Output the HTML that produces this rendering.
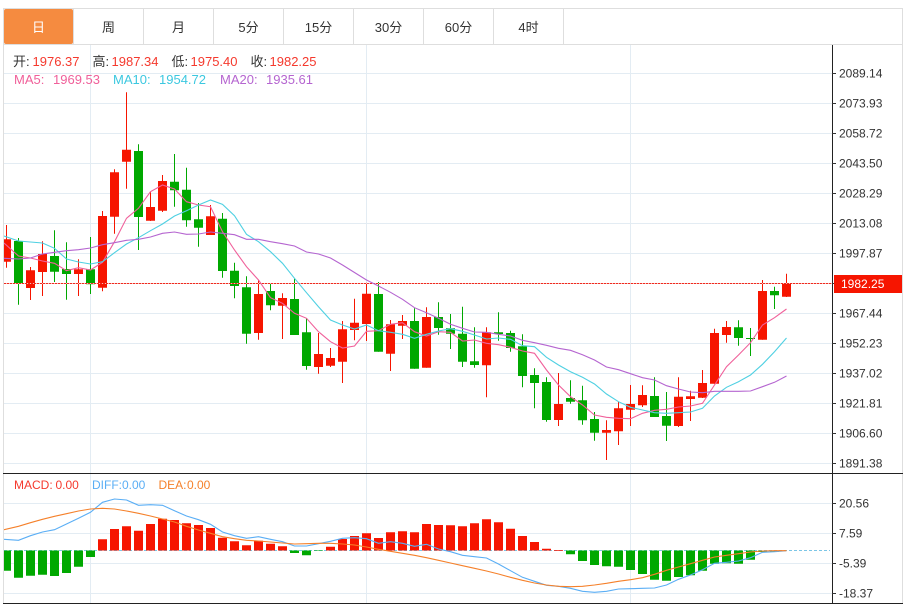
<!DOCTYPE html>
<html><head><meta charset="utf-8"><style>
html,body{margin:0;padding:0;background:#fff;width:906px;height:605px;overflow:hidden}
svg{display:block;font-family:"Liberation Sans","Noto Sans CJK SC",sans-serif}
path,polyline{fill:none}
</style></head><body>
<svg width="906" height="605" viewBox="0 0 906 605" xmlns="http://www.w3.org/2000/svg">
<defs><clipPath id="c"><rect x="4" y="45" width="828" height="558"/></clipPath></defs>
<!-- frame -->
<rect x="4" y="9" width="69" height="35" rx="2" fill="#f58b40"/>
<path stroke="#dedede" d="M3 8.5H903M3.5 8V604M902.5 8V604M3 44.5H903M73.5 9V44M143.5 9V44M213.5 9V44M283.5 9V44M353.5 9V44M423.5 9V44M493.5 9V44M563.5 9V44"/>
<g font-size="13" fill="#333" text-anchor="middle">
<text x="38.5" y="32" fill="#fff">日</text><text x="108.5" y="32">周</text><text x="178.5" y="32">月</text><text x="248.5" y="32">5分</text><text x="318.5" y="32">15分</text><text x="388.5" y="32">30分</text><text x="458.5" y="32">60分</text><text x="528.5" y="32">4时</text>
</g>
<!-- grid -->
<path stroke="#e3ecf3" d="M4 73.5H832M4 103.5H832M4 133.5H832M4 163.5H832M4 193.5H832M4 223.5H832M4 253.5H832M4 313.5H832M4 343.5H832M4 373.5H832M4 403.5H832M4 433.5H832M4 463.5H832M4 503.5H832M4 533.5H832M4 563.5H832M4 593.5H832M90.5 45V473M366.5 45V473M630.5 45V473M90.5 474V603M366.5 474V603M630.5 474V603"/>
<g clip-path="url(#c)">
<!-- wicks -->
<path stroke="#f61500" stroke-width="1" d="M6.5 225V267.7M30.5 267V300M42.5 241.3V296M78.5 259.3V296M102.5 211V291.3M114.5 169.3V233.7M126.5 92.3V188.7M150.5 191.7V221M162.5 175V212M210.5 205V235M258.5 280.3V339.7M282.5 293.3V339M318.5 333V373.7M330.5 348V367M342.5 321V383M354.5 298.7V340.3M366.5 282.7V341M390.5 320V371M402.5 315V339M426.5 307.3V367.7M486.5 327.3V397.3M558.5 373V426M606.5 420.3V460M618.5 402V445M630.5 385V426M642.5 385.3V407M678.5 377.3V427M690.5 390.7V421M702.5 370V398M714.5 328.7V383.7M726.5 321V342.7M762.5 280V339.7M786.5 273.7V297"/>
<path stroke="#00a800" stroke-width="1" d="M18.5 238V304.7M54.5 230.3V282M66.5 242.3V299.7M90.5 237V294M138.5 144.3V250M174.5 154V206.7M186.5 167.7V226.7M198.5 203V246.7M222.5 213V277.7M234.5 262.7V298.3M246.5 276.3V343.7M270.5 283.3V310.3M294.5 278.7V335M306.5 318.3V369.7M378.5 282V351.7M414.5 308.3V368.7M438.5 302.3V334.7M450.5 314V349M462.5 306.7V367M474.5 327.3V367.7M498.5 312.3V340.7M510.5 330.7V351.7M522.5 334.3V387.3M534.5 368.3V408.3M546.5 377.3V421.7M570.5 380.3V403.7M582.5 385.7V424.7M594.5 412V440.7M654.5 377.3V417M666.5 392V441M738.5 320.3V345.7M750.5 328V356M774.5 286.7V309"/>
<!-- bodies -->
<path stroke="#f61500" stroke-width="9" d="M6.5 239.3V261.7M30.5 270.3V288M42.5 254V272M78.5 269.3V274M102.5 216V287.7M114.5 172.3V216.7M126.5 149.7V161.7M150.5 207V220.7M162.5 181V210.7M210.5 216.3V235M258.5 294V333M282.5 298V305.7M318.5 354V367M330.5 358V365.7M342.5 329.3V361.7M354.5 322.7V330M366.5 293.7V324M390.5 324.3V353.7M402.5 321V325.7M426.5 317V367.7M486.5 332.3V365.3M558.5 404V420M606.5 430V432.7M618.5 408.3V431.3M630.5 404V409.7M642.5 395V405.3M678.5 396.7V426M690.5 396.3V399M702.5 383V397.7M714.5 333V383.7M726.5 327V335M762.5 291V339.7M786.5 283.7V296.7"/>
<path stroke="#00a800" stroke-width="9" d="M18.5 241V284M54.5 256V271.7M66.5 269V274M90.5 269.3V284.3M138.5 151V217M174.5 181.7V190.3M186.5 189.7V220.3M198.5 219.3V227.7M222.5 218.7V271M234.5 270.7V286M246.5 287.3V333.7M270.5 291V305.3M294.5 299V335M306.5 332.3V366M378.5 294V351.7M414.5 321V368.7M438.5 317V328M450.5 328.3V333.7M462.5 333.7V361.7M474.5 361.3V365M498.5 332.3V334M510.5 333V348M522.5 346.3V376M534.5 375V383M546.5 382V420M570.5 398V401.7M582.5 400.3V420.3M594.5 419V432.7M654.5 396V417M666.5 416V425.7M738.5 327.3V338M750.5 338V339M774.5 291V295.3"/>
<!-- price line -->
<path stroke="#f9bcb4" stroke-width="1" d="M4 283.5H832"/>
<path stroke="#ee2a20" stroke-width="1" stroke-dasharray="2 1" d="M4 283.5H832"/>
<!-- MA lines -->
<polyline stroke="#f0609a" stroke-width="1.1" points="4,243 18.5,256 30.5,258 42.5,261 54.5,263.3 66.5,270.7 78.5,267.7 90.5,270 102.5,262.3 114.5,241.7 126.5,218.3 138.5,208.3 150.5,191.7 162.5,185 174.5,189 186.5,201.7 198.5,205 210.5,206.7 222.5,231.7 234.5,250 246.5,266.7 258.5,280 270.5,297.7 282.5,303.3 294.5,313.3 306.5,318.3 318.5,331.7 330.5,341.7 342.5,348 354.5,346 366.5,331.3 378.5,330.7 390.5,324.3 402.5,322.7 414.5,331.7 426.5,336 438.5,331.7 450.5,332.3 462.5,341 474.5,340 486.5,343.3 498.5,344.7 510.5,347.3 522.5,351 534.5,353.3 546.5,370 558.5,385 570.5,396.7 582.5,405 594.5,415 606.5,417.3 618.5,418.3 630.5,418.7 642.5,413.3 654.5,410.3 666.5,409.3 678.5,407 690.5,406 702.5,403.3 714.5,385 726.5,366.7 738.5,355 750.5,342.7 762.5,325 774.5,317.7 786.5,309"/>
<polyline stroke="#4fd0e2" stroke-width="1.1" points="4,236 18.5,241 30.5,242 42.5,243 54.5,248.3 66.5,259 78.5,262 90.5,264 102.5,261.7 114.5,252.7 126.5,244 138.5,237.7 150.5,230.7 162.5,224 174.5,216 186.5,210.7 198.5,205 210.5,200 222.5,204.3 234.5,215.7 246.5,234.3 258.5,241.7 270.5,251.7 282.5,263.3 294.5,278.3 306.5,292.7 318.5,306.7 330.5,320 342.5,325 354.5,329 366.5,325 378.5,330.7 390.5,332.3 402.5,334.3 414.5,338.3 426.5,334.3 438.5,331 450.5,328.7 462.5,331.3 474.5,335 486.5,339 498.5,338 510.5,339.3 522.5,345.7 534.5,346.7 546.5,357.3 558.5,365 570.5,371.7 582.5,377.3 594.5,384 606.5,394 618.5,401.7 630.5,407.3 642.5,410 654.5,412.7 666.5,413.3 678.5,412.7 690.5,412 702.5,408.3 714.5,396 726.5,387.3 738.5,381.7 750.5,375 762.5,364.3 774.5,351.7 786.5,338"/>
<polyline stroke="#b565d0" stroke-width="1.1" points="4,258.3 18.5,259 30.5,258 42.5,254 54.5,252.3 66.5,250.7 78.5,249.7 90.5,248 102.5,244.7 114.5,242.7 126.5,240.3 138.5,239.3 150.5,237 162.5,233.3 174.5,232 186.5,234.3 198.5,234 210.5,232 222.5,233.3 234.5,234.7 246.5,239.3 258.5,239.3 270.5,241.7 282.5,243.7 294.5,246 306.5,252 318.5,254 330.5,258 342.5,265 354.5,272.5 366.5,280 378.5,286 390.5,292.3 402.5,299.3 414.5,307.7 426.5,312.7 438.5,318.3 450.5,324.3 462.5,328.3 474.5,332 486.5,332.3 498.5,334.3 510.5,336 522.5,340.3 534.5,342.7 546.5,345.3 558.5,348.3 570.5,350.3 582.5,354.7 594.5,360 606.5,367 618.5,369.7 630.5,373.7 642.5,377.7 654.5,380 666.5,385.7 678.5,389 690.5,392 702.5,392.7 714.5,391.3 726.5,391.3 738.5,391.3 750.5,391 762.5,386.7 774.5,382.3 786.5,376"/>
<!-- MACD zero line -->
<path stroke="#7cc6e6" stroke-width="1" stroke-dasharray="3 2" d="M4 550.5H830"/>
<!-- MACD bars -->
<path stroke="#f61500" stroke-width="9" d="M102.5 539.3V550.5M114.5 529V550.5M126.5 526.3V550.5M138.5 530.7V550.5M150.5 524V550.5M162.5 518.7V550.5M174.5 520V550.5M186.5 523.3V550.5M198.5 525V550.5M210.5 528V550.5M222.5 537.7V550.5M234.5 541.3V550.5M246.5 545.3V550.5M258.5 540.7V550.5M270.5 543.7V550.5M282.5 546.3V550.5M330.5 546.7V550.5M342.5 539V550.5M354.5 536V550.5M366.5 533.3V550.5M378.5 538V550.5M390.5 532.3V550.5M402.5 531.3V550.5M414.5 532.3V550.5M426.5 524V550.5M438.5 525V550.5M450.5 525.3V550.5M462.5 526.3V550.5M474.5 523.3V550.5M486.5 519.3V550.5M498.5 522.3V550.5M510.5 528.7V550.5M522.5 536V550.5M534.5 542V550.5M546.5 548.7V550.5M558.5 550V550.7"/>
<path stroke="#00a800" stroke-width="9" d="M6.5 550.5V570.7M18.5 550.5V577.7M30.5 550.5V575.7M42.5 550.5V574.7M54.5 550.5V576M66.5 550.5V573M78.5 550.5V566.7M90.5 550.5V557M294.5 550.5V553M306.5 550.5V555.3M318.5 550.5V551M570.5 550.5V554.3M582.5 550.5V561M594.5 550.5V565M606.5 550.5V566.3M618.5 550.5V566.7M630.5 550.5V570M642.5 550.5V574M654.5 550.5V579.7M666.5 550.5V580.7M678.5 550.5V577M690.5 550.5V575.3M702.5 550.5V570.7M714.5 550.5V563.7M726.5 550.5V563.3M738.5 550.5V563.7M750.5 550.5V559.7M762.5 550.5V552M774.5 550.5V551.7"/>
<!-- DIFF / DEA -->
<polyline stroke="#5aaef5" stroke-width="1.1" points="4,539.3 18.5,540.3 30.5,535.7 42.5,532 54.5,529.7 66.5,524 78.5,518.3 90.5,512.3 102.5,502.3 114.5,499 126.5,500 138.5,505.3 150.5,504.7 162.5,505.3 174.5,510.7 186.5,516 198.5,519.7 210.5,524.3 222.5,532 234.5,535.7 246.5,538.3 258.5,536.7 270.5,539.3 282.5,541.7 294.5,546 306.5,546 318.5,543.7 330.5,541.3 342.5,538.3 354.5,537.7 366.5,538.7 378.5,543.3 390.5,541.7 402.5,543.3 414.5,546.3 426.5,544.3 438.5,549 450.5,551.7 462.5,555.3 474.5,556.7 486.5,558 498.5,564 510.5,570.7 522.5,577.3 534.5,581.3 546.5,585.3 558.5,586.3 570.5,588.3 582.5,591.3 594.5,592.3 606.5,591.3 618.5,589 630.5,588.7 642.5,588.3 654.5,588 666.5,585 678.5,579.3 690.5,575 702.5,569.7 714.5,563.3 726.5,562.3 738.5,561 750.5,557.7 762.5,552.3 774.5,551.7 786.5,550.7"/>
<polyline stroke="#f5802a" stroke-width="1.1" points="4,529.7 18.5,526.3 30.5,522.7 42.5,519.3 54.5,516.3 66.5,513.7 78.5,511 90.5,509 102.5,508.3 114.5,509 126.5,511 138.5,513.3 150.5,516 162.5,519 174.5,522 186.5,526.3 198.5,530 210.5,533.3 222.5,536.7 234.5,538.7 246.5,540.3 258.5,541 270.5,542 282.5,543 294.5,544 306.5,543.7 318.5,543.3 330.5,543.3 342.5,544 354.5,545 366.5,547 378.5,549.3 390.5,551.3 402.5,553.3 414.5,555.3 426.5,557.7 438.5,560.3 450.5,563 462.5,565.7 474.5,568.3 486.5,571 498.5,574 510.5,577.3 522.5,580.3 534.5,583 546.5,585 558.5,586.3 570.5,586.7 582.5,586.3 594.5,585 606.5,583.3 618.5,581.3 630.5,579.7 642.5,577.7 654.5,574.3 666.5,570.3 678.5,567 690.5,563.7 702.5,560.3 714.5,557 726.5,555.3 738.5,553.7 750.5,552 762.5,551 774.5,550.7 786.5,550.7"/>
</g>
<!-- axes -->
<path stroke="#222" d="M832.5 45V604M3 473.5H903M3 603.5H903"/>
<path stroke="#333" d="M832 73.5H836M832 103.5H836M832 133.5H836M832 163.5H836M832 193.5H836M832 223.5H836M832 253.5H836M832 283.5H837M832 313.5H836M832 343.5H836M832 373.5H836M832 403.5H836M832 433.5H836M832 463.5H836M832 503.5H836M832 533.5H836M832 563.5H836M832 593.5H836"/>
<rect x="834" y="275" width="68" height="18" fill="#f61500"/>
<g font-size="12" fill="#333">
<text x="839" y="77.5">2089.14</text><text x="839" y="107.5">2073.93</text><text x="839" y="137.5">2058.72</text><text x="839" y="167.5">2043.50</text><text x="839" y="197.5">2028.29</text><text x="839" y="227.5">2013.08</text><text x="839" y="257.5">1997.87</text><text x="841" y="288" fill="#fff">1982.25</text><text x="839" y="317.5">1967.44</text><text x="839" y="347.5">1952.23</text><text x="839" y="377.5">1937.02</text><text x="839" y="407.5">1921.81</text><text x="839" y="437.5">1906.60</text><text x="839" y="467.5">1891.38</text>
<text x="839" y="507.5">20.56</text><text x="839" y="537.5">7.59</text><text x="839" y="567.5">-5.39</text><text x="839" y="597.5">-18.37</text>
</g>
<!-- legends -->
<g font-size="13">
<text x="13" y="66" fill="#333">开:</text><text x="32.5" y="66" fill="#f5392d">1976.37</text>
<text x="92.5" y="66" fill="#333">高:</text><text x="111.5" y="66" fill="#f5392d">1987.34</text>
<text x="171.5" y="66" fill="#333">低:</text><text x="190.5" y="66" fill="#f5392d">1975.40</text>
<text x="250.5" y="66" fill="#333">收:</text><text x="269.5" y="66" fill="#f5392d">1982.25</text>
<text x="14" y="84" fill="#f0609a">MA5:</text><text x="53" y="84" fill="#f0609a">1969.53</text>
<text x="113" y="84" fill="#3cc8e0">MA10:</text><text x="159" y="84" fill="#3cc8e0">1954.72</text>
<text x="220" y="84" fill="#b565d0">MA20:</text><text x="266" y="84" fill="#b565d0">1935.61</text>
</g>
<g font-size="12">
<text x="14" y="489" fill="#f5392d">MACD:</text><text x="55.5" y="489" fill="#f5392d">0.00</text>
<text x="92" y="489" fill="#5aaef5">DIFF:</text><text x="122" y="489" fill="#5aaef5">0.00</text>
<text x="158.5" y="489" fill="#f5802a">DEA:</text><text x="187" y="489" fill="#f5802a">0.00</text>
</g>
</svg>
</body></html>
